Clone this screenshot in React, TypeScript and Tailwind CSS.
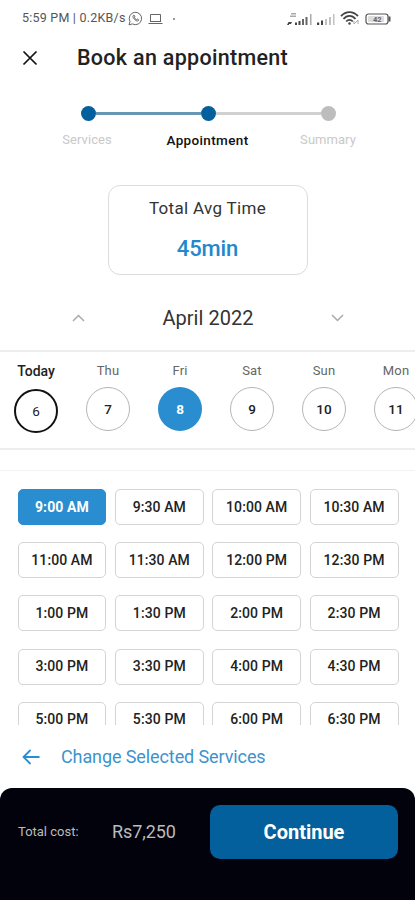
const days = [
  { name: 'Today', date: '6' },
  { name: 'Thu', date: '7' },
  { name: 'Fri', date: '8' },
  { name: 'Sat', date: '9' },
  { name: 'Sun', date: '10' },
  { name: 'Mon', date: '11' },
];

const slots = [
  '9:00 AM', '9:30 AM', '10:00 AM', '10:30 AM',
  '11:00 AM', '11:30 AM', '12:00 PM', '12:30 PM',
  '1:00 PM', '1:30 PM', '2:00 PM', '2:30 PM',
  '3:00 PM', '3:30 PM', '4:00 PM', '4:30 PM',
  '5:00 PM', '5:30 PM', '6:00 PM', '6:30 PM',
];

function StatusBar() {
  return (
    <div className="flex h-9 shrink-0 items-center pl-[22px] pr-7 pt-px text-[#555]">
      <span className="w-[106px] whitespace-nowrap text-[12.5px] tracking-[0.22px]">5:59 PM | 0.2KB/s</span>
      <svg className="h-[15px] w-[15px]" viewBox="0 0 15 15" fill="none" stroke="currentColor">
        <path d="M1 13.900l1-3.400a6.200 6.200 0 1 1 2.400 2.400z" strokeWidth="0.9" />
        <path d="M5.400 4.400c-.7.6-.6 1.700.3 3 1.100 1.600 2.700 2.700 3.800 2.600.8-.1 1.200-.7 1.100-1.300L9.200 8l-.8.7C7.500 8.300 6.800 7.500 6.400 6.700L7 6l-.6-1.500z" strokeWidth="0.9" />
      </svg>
      <svg className="ml-[5px] h-3 w-[15px]" viewBox="0 0 15 12" fill="none" stroke="currentColor">
        <path d="M2.500 9V1.500h10V9M.5 10.500h14M2.500 8.500h10" strokeWidth="0.9" />
      </svg>
      <span className="ml-[10px] h-[2px] w-[2px] rounded-full bg-[#777]" />
      <svg className="ml-auto h-[14px] w-[26px]" viewBox="0 0 26 14">
        <path d="M0 13l1.500-3H5l-1 2H2v1zM8 10.500h2V13H8zM11.500 9h2v4h-2z" fill="#444" />
        <path d="M15 7h2v6h-2zM18.500 5h2v8h-2z" fill="#666" />
        <path d="M23 2h1.500v11H23zM4 1h5v1.500H4zM3 3.500h6V5H3z" fill="#aaa" />
      </svg>
      <svg className="ml-[3px] h-[14px] w-5" viewBox="0 0 20 14">
        <path d="M1 10.500h2.200V13H1zM5 8.500h2V13H5z" fill="#444" />
        <path d="M9 7h2v6H9zM13 5h2v8h-2zM17 2h1.500v11H17z" fill="#c2c2c2" />
      </svg>
      <svg className="ml-[4px] h-[15px] w-5" viewBox="0 0 20 15" fill="none" stroke="#444">
        <path d="M1 5.200C6-.2 13-.2 18 5.200" strokeWidth="1.900" />
        <path d="M3.500 8c3.500-4.200 8.500-4.200 12 0" strokeWidth="1.900" />
        <path d="M6.200 10.500c2-2.300 4.600-2.300 6.600 0" strokeWidth="1.800" />
        <circle cx="9.500" cy="12.500" r="1.200" fill="#444" stroke="none" />
        <path d="M14 13l4-4M14 10v3M18 9v4" stroke="#aaa" />
      </svg>
      <svg className="ml-[5px] -mr-[5px] h-3 w-[27px]" viewBox="0 0 27 12" fill="none" stroke="#555">
        <rect x="1" y="1" width="22" height="10" rx="2.500" strokeWidth="1.200" />
        <path d="M24.500 3.500v5" strokeWidth="2" />
        <rect x="3" y="3" width="16" height="6" rx="1" fill="#ddd" stroke="none" />
        <text x="8" y="9" fontSize="7.500" fontWeight="700" fill="#666" stroke="none">42</text>
      </svg>
    </div>
  );
}

function Stepper() {
  return (
    <div className="flex h-[70px] shrink-0 flex-col">
      <div className="flex h-4 items-center pl-[80.500px] pr-[79.500px]">
        <span className="h-[15px] w-[15px] rounded-full bg-[#04609c]" />
        <span className="h-[3px] flex-1 bg-[#6797b5]" />
        <span className="h-[15px] w-[15px] rounded-full bg-[#04609c]" />
        <span className="h-[3px] flex-1 bg-[#d0d0d0]" />
        <span className="h-[15px] w-[15px] rounded-full bg-[#bdbdbd]" />
      </div>
      <div className="mt-[9px] flex justify-center text-[13px] leading-5 text-[#c9c9c9]">
        <span className="w-[120px] text-center tracking-[0.05px]">Services</span>
        <span className="w-[121px] text-center text-[13.500px] font-medium tracking-[0.35px] text-[#111]">Appointment</span>
        <span className="w-[120px] text-center tracking-[0.05px]">Summary</span>
      </div>
    </div>
  );
}

function Day({ name, date }: { name: string; date: string }) {
  const today = name === 'Today';
  const selected = date === '8';
  const circle = today
    ? 'mt-[7px] border-2 border-[#111] text-[#222]'
    : selected
      ? 'mt-[6px] bg-[#2a8dd0] font-bold text-white'
      : 'mt-[6px] border border-[#b5b5b5] font-medium text-[#222]';
  return (
    <div className="flex w-[72px] shrink-0 flex-col items-center">
      <span className={today ? 'text-[14px] font-medium leading-[21px] text-[#222]' : 'text-[13px] leading-5 tracking-[0.2px] text-[#666]'}>
        {name}
      </span>
      <span className={'flex h-[44px] w-[44px] items-center justify-center rounded-full text-[13.500px] ' + circle}>{date}</span>
    </div>
  );
}

export default function App() {
  return (
    <div className="flex h-[900px] w-[415px] flex-col overflow-hidden bg-white font-[Roboto,sans-serif]">
      <StatusBar />
      <div className="flex h-[44px] shrink-0 items-center pl-[22px]">
        <svg className="h-4 w-4" viewBox="0 0 16 16" fill="none" stroke="#111" strokeWidth="1.700">
          <path d="M1.500 1.500l13 13M14.500 1.500l-13 13" />
        </svg>
        <h1 className="ml-[39px] whitespace-nowrap text-[21.500px] font-medium tracking-[0.3px] text-[#222]">Book an appointment</h1>
      </div>
      <div className="h-[25px] shrink-0" />
      <Stepper />
      <div className="mt-[10px] flex h-[90px] w-[200px] shrink-0 flex-col items-center self-center rounded-xl border-[1.500px] border-[#dcdcdc] pt-[10px]">
        <span className="text-[17px] leading-6 tracking-[0.33px] text-[#333]">Total Avg Time</span>
        <span className="mt-[15px] text-[22px] font-medium leading-7 tracking-[-0.1px] text-[#2288ca]">45min</span>
      </div>
      <div className="flex h-[75px] shrink-0 items-center justify-between pl-[72px] pr-[71px] pt-[10px]">
        <svg className="h-2 w-[13px]" viewBox="0 0 13 8" fill="none" stroke="#aaa" strokeWidth="1.500"><path d="M1 7l5.500-5.500L12 7" /></svg>
        <span className="text-[20px] tracking-[0.05px] text-[#333]">April 2022</span>
        <svg className="h-2 w-[13px]" viewBox="0 0 13 8" fill="none" stroke="#aaa" strokeWidth="1.500"><path d="M1 1l5.500 5.500L12 1" /></svg>
      </div>
      <div className="flex h-[100px] shrink-0 overflow-hidden border-y-2 border-[#eee] pt-[9px]">
        {days.map((d) => <Day key={d.name} name={d.name} date={d.date} />)}
      </div>
      <div className="mt-[20px] h-px shrink-0 bg-[#f2f2f2]" />
      <div className="h-[254px] shrink-0 overflow-hidden pl-[17.500px] pr-[16.500px] pt-[18px]">
        <div className="grid grid-cols-4 gap-x-[8.500px] gap-y-[17.200px]">
          {slots.map((s, i) => (
            <span
              key={s}
              className={
                'flex h-9 items-center justify-center whitespace-nowrap rounded-[5px] border text-[14px] tracking-[0.1px] ' +
                (i === 0 ? 'border-[#2a8dd0] bg-[#2a8dd0] font-bold text-white' : 'border-[#d4d4d4] font-medium text-[#222]')
              }
            >
              {s}
            </span>
          ))}
        </div>
      </div>
      <div className="flex h-[63px] shrink-0 items-center pl-[22px]">
        <svg className="h-4 w-[18px]" viewBox="0 0 18 16" fill="none" stroke="#2a8dd0" strokeWidth="1.800">
          <path d="M17.500 8H1.500M8.500 1l-7 7 7 7" />
        </svg>
        <span className="ml-[21px] whitespace-nowrap text-[18px] tracking-[-0.1px] text-[#3c93cd]">Change Selected Services</span>
      </div>
      <div className="flex flex-1 items-start rounded-t-xl bg-[#02020c] pl-[18px] pt-[17px]">
        <span className="w-[94px] text-[13px] leading-[53px] text-[#bbb]">Total cost:</span>
        <span className="w-[98px] text-[18px] leading-[53px] tracking-[-0.1px] text-[#bbb]">Rs7,250</span>
        <button className="h-[54px] w-[188px] rounded-[10px] bg-[#04609c] text-[20px] font-bold text-white">Continue</button>
      </div>
    </div>
  );
}
